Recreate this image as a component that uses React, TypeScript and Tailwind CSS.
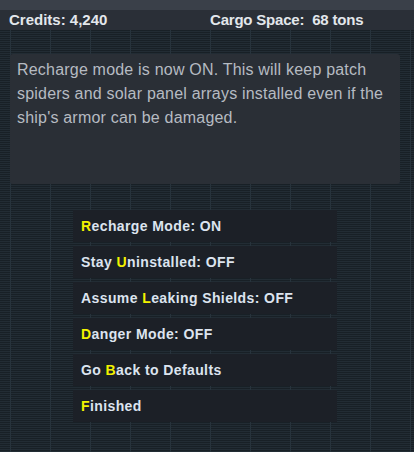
import React from 'react';

const options: Array<{ pre: string; key: string; post: string }> = [
  { pre: '', key: 'R', post: 'echarge Mode: ON' },
  { pre: 'Stay ', key: 'U', post: 'ninstalled: OFF' },
  { pre: 'Assume ', key: 'L', post: 'eaking Shields: OFF' },
  { pre: '', key: 'D', post: 'anger Mode: OFF' },
  { pre: 'Go ', key: 'B', post: 'ack to Defaults' },
  { pre: '', key: 'F', post: 'inished' },
];

export default function App() {
  return (
    <div className="h-[452px] w-[414px] overflow-hidden bg-[#1b2128] font-['Liberation_Sans',Arial,sans-serif]">
      <div className="h-[10px] bg-[#3a4049]" />
      <div className="flex h-[20px] items-center bg-[#2a2f37] text-[15px] font-bold text-[#e3e7ec]">
        <span className="w-[210px] pl-[9px]">Credits: 4,240</span>
        <span className="whitespace-pre tracking-[-0.2px]">Cargo Space:  68 tons</span>
      </div>
      <div className="h-[422px] bg-[#1b2128] bg-[image:linear-gradient(to_right,#27333c_1px,transparent_1px),linear-gradient(to_bottom,#182026_1px,#222c34_1px)] bg-[size:40px_100%,100%_2px] bg-[position:10px_0,0_0] px-[10px] pt-[24px]">
        <div className="h-[130px] w-[390px] whitespace-nowrap rounded-[3px] bg-[#2a2f36] px-[7px] pt-[4px] text-[16px] leading-[24px] tracking-[0.2px] text-[#b6bbc2]">
          Recharge mode is now ON. This will keep patch
          <br />
          spiders and solar panel arrays installed even if the
          <br />
          ship's armor can be damaged.
        </div>
        <div className="mt-[26px] ml-[63px] flex w-[264px] flex-col gap-[4px]">
          {options.map((o) => (
            <div key={o.key} className="flex h-[32px] items-center bg-[#1c2027] pl-[8px] text-[14px] font-bold tracking-[0.4px] text-[#dce4ef]">
              <span className="whitespace-pre">
                {o.pre}
                <span className="text-[#f2f200]">{o.key}</span>
                {o.post}
              </span>
            </div>
          ))}
        </div>
      </div>
    </div>
  );
}
